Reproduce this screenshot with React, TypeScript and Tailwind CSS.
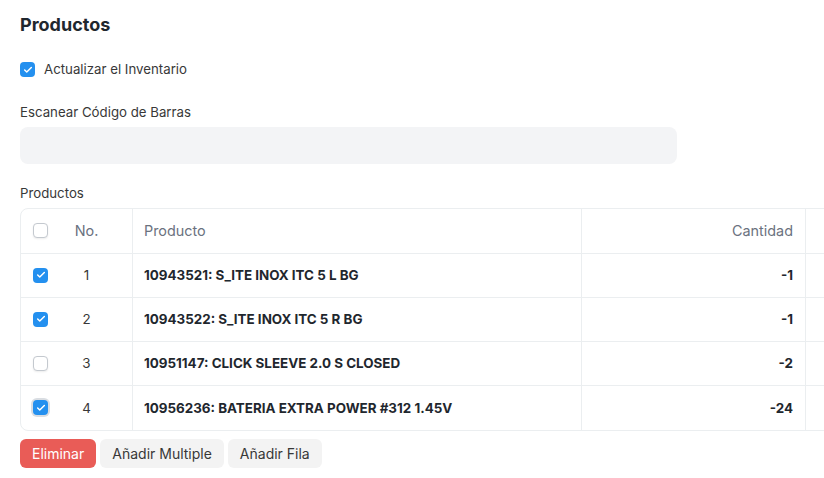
import { Check } from "lucide-react";

const rows = [
  { no: 1, producto: "10943521: S_ITE INOX ITC 5 L BG", cantidad: "-1", checked: true },
  { no: 2, producto: "10943522: S_ITE INOX ITC 5 R BG", cantidad: "-1", checked: true },
  { no: 3, producto: "10951147: CLICK SLEEVE 2.0 S CLOSED", cantidad: "-2", checked: false },
  { no: 4, producto: "10956236: BATERIA EXTRA POWER #312 1.45V", cantidad: "-24", checked: true, focus: true },
];

const Box = ({ checked, focus }: { checked: boolean; focus?: boolean }) =>
  checked ? (
    <span
      className={`flex h-[15px] w-[15px] items-center justify-center rounded-[4px] bg-[#2490ef] ${
        focus ? "ring-2 ring-[#d9dde2]" : ""
      }`}
    >
      <Check size={10} strokeWidth={3.5} className="text-white" />
    </span>
  ) : (
    <span className="block h-[15px] w-[15px] rounded-[4px] border border-[#c4c9cf] bg-white shadow-[0_1px_2px_rgba(0,0,0,0.08)]" />
  );

export default function App() {
  return (
    <div className="w-[824px] h-[478px] overflow-hidden bg-white font-['Inter',sans-serif] text-[#1f272e]">
      <div className="px-5 pt-[13px]">
        <h1 className="text-[18px] font-bold leading-[24px]">Productos</h1>

        <label className="mt-[23px] flex items-center gap-[9px]">
          <Box checked />
          <span className="text-[13.25px] text-[#383838]">Actualizar el Inventario</span>
        </label>

        <div className="mt-[24px] text-[13.25px] leading-[16px] text-[#383838]">Escanear Código de Barras</div>
        <div className="mt-[7px] h-[37px] w-[657px] rounded-[8px] bg-[#f3f4f6]" />

        <div className="mt-[21px] text-[13.25px] leading-[16px] text-[#383838]">Productos</div>
        <div className="mt-[7px] w-[830px] overflow-hidden rounded-[8px] border border-[#ebeef0]">
          <div className="flex h-[45px] items-center border-b border-[#ebeef0] text-[14.4px] text-[#6b7280]">
            <div className="flex h-full w-[112px] shrink-0 items-center border-r border-[#ebeef0]">
              <span className="ml-[12px]">
                <Box checked={false} />
              </span>
              <span className="ml-[14px] w-[49px] text-center">No.</span>
            </div>
            <div className="flex h-full w-[449px] shrink-0 items-center border-r border-[#ebeef0] pl-[11px]">Producto</div>
            <div className="flex h-full w-[224px] shrink-0 items-center justify-end border-r border-[#ebeef0] px-3">
              Cantidad
            </div>
            <div className="h-full flex-1" />
          </div>
          {rows.map((r, i) => (
            <div
              key={r.no}
              className={`flex h-[44px] items-center text-[13.4px] ${i < rows.length - 1 ? "border-b border-[#ebeef0]" : ""}`}
            >
              <div className="flex h-full w-[112px] shrink-0 items-center border-r border-[#ebeef0]">
                <span className="ml-[12px]">
                  <Box checked={r.checked} focus={r.focus} />
                </span>
                <span className="ml-[14px] w-[49px] text-center text-[#383838]">{r.no}</span>
              </div>
              <div className="flex h-full w-[449px] shrink-0 items-center border-r border-[#ebeef0] pl-[11px] font-bold">
                {r.producto}
              </div>
              <div className="flex h-full w-[224px] shrink-0 items-center justify-end border-r border-[#ebeef0] px-3 font-bold">
                {r.cantidad}
              </div>
              <div className="h-full flex-1" />
            </div>
          ))}
        </div>

        <div className="mt-2 flex gap-1">
          <button className="h-[29px] rounded-[6px] bg-[#e95c57] px-3 text-[14px] text-white">Eliminar</button>
          <button className="h-[29px] rounded-[6px] bg-[#f3f3f3] px-3 text-[14px] text-[#383838]">Añadir Multiple</button>
          <button className="h-[29px] rounded-[6px] bg-[#f3f3f3] px-3 text-[14px] text-[#383838]">Añadir Fila</button>
        </div>
      </div>
    </div>
  );
}
